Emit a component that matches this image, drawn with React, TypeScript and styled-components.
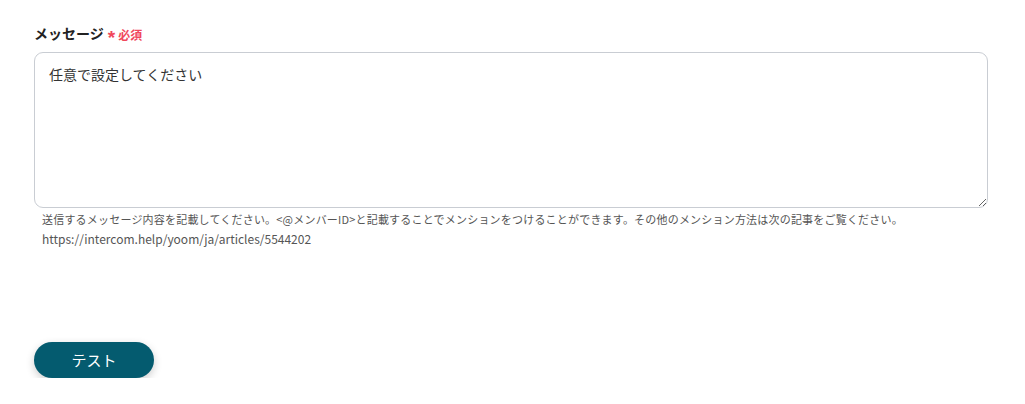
import React from "react";
import styled, { createGlobalStyle } from "styled-components";

const FONT = `"Noto Sans CJK JP", "Noto Sans", sans-serif`;

const Global = createGlobalStyle`
  html, body { margin: 0; padding: 0; background: #fff; }
  body { font-family: ${FONT}; color: #333; }
`;

const Page = styled.div`
  padding: 22px 37px 0 34px;
  display: flex;
  flex-direction: column;
`;

const LabelRow = styled.div`
  display: flex;
  align-items: center;
  gap: 4px;
  height: 22px;
  margin-bottom: 8px;
`;

const Label = styled.span`
  font-size: 14px;
  font-weight: 700;
  color: #222;
`;

const Required = styled.span`
  font-size: 12px;
  font-weight: 700;
  color: #f0485b;
  display: flex;
  align-items: center;
  gap: 3px;
  padding-top: 2px;
`;

const Star = styled.span`
  font-family: "Liberation Sans", sans-serif;
  font-size: 19px;
  line-height: 1;
  padding-top: 7px;
`;

const TextArea = styled.textarea`
  box-sizing: border-box;
  width: 954px;
  height: 156px;
  border: 1px solid #c9cdd3;
  border-radius: 9px;
  padding: 10px 14px;
  font-family: ${FONT};
  font-size: 14px;
  line-height: 22px;
  color: #333;
  resize: vertical;
  outline: none;
  &::placeholder { color: #333; }
`;

const Help = styled.div`
  margin-top: 2px;
  padding-left: 8px;
  display: flex;
  flex-direction: column;
  color: #555;
`;

const HelpLine = styled.span<{ $url?: boolean }>`
  font-size: ${(p) => (p.$url ? "12px" : "11px")};
  letter-spacing: ${(p) => (p.$url ? "0" : "0.2px")};
  line-height: 19px;
  white-space: nowrap;
`;

const Button = styled.button`
  margin-top: 94px;
  width: 120px;
  height: 36px;
  padding: 0 0 2px;
  border: none;
  border-radius: 18px;
  background: #045b6f;
  color: #fff;
  font-family: ${FONT};
  font-size: 15px;
  font-weight: 400;
  box-shadow: 0 3px 8px rgba(0,0,0,0.2);
  align-self: flex-start;
`;

export default function App() {
  return (
    <>
      <Global />
      <Page>
        <LabelRow>
          <Label>メッセージ</Label>
          <Required><Star>*</Star>必須</Required>
        </LabelRow>
        <TextArea placeholder="任意で設定してください" />
        <Help>
          <HelpLine>
            送信するメッセージ内容を記載してください。&lt;@メンバーID&gt;と記載することでメンションをつけることができます。その他のメンション方法は次の記事をご覧ください。
          </HelpLine>
          <HelpLine $url>https://intercom.help/yoom/ja/articles/5544202</HelpLine>
        </Help>
        <Button>テスト</Button>
      </Page>
    </>
  );
}
